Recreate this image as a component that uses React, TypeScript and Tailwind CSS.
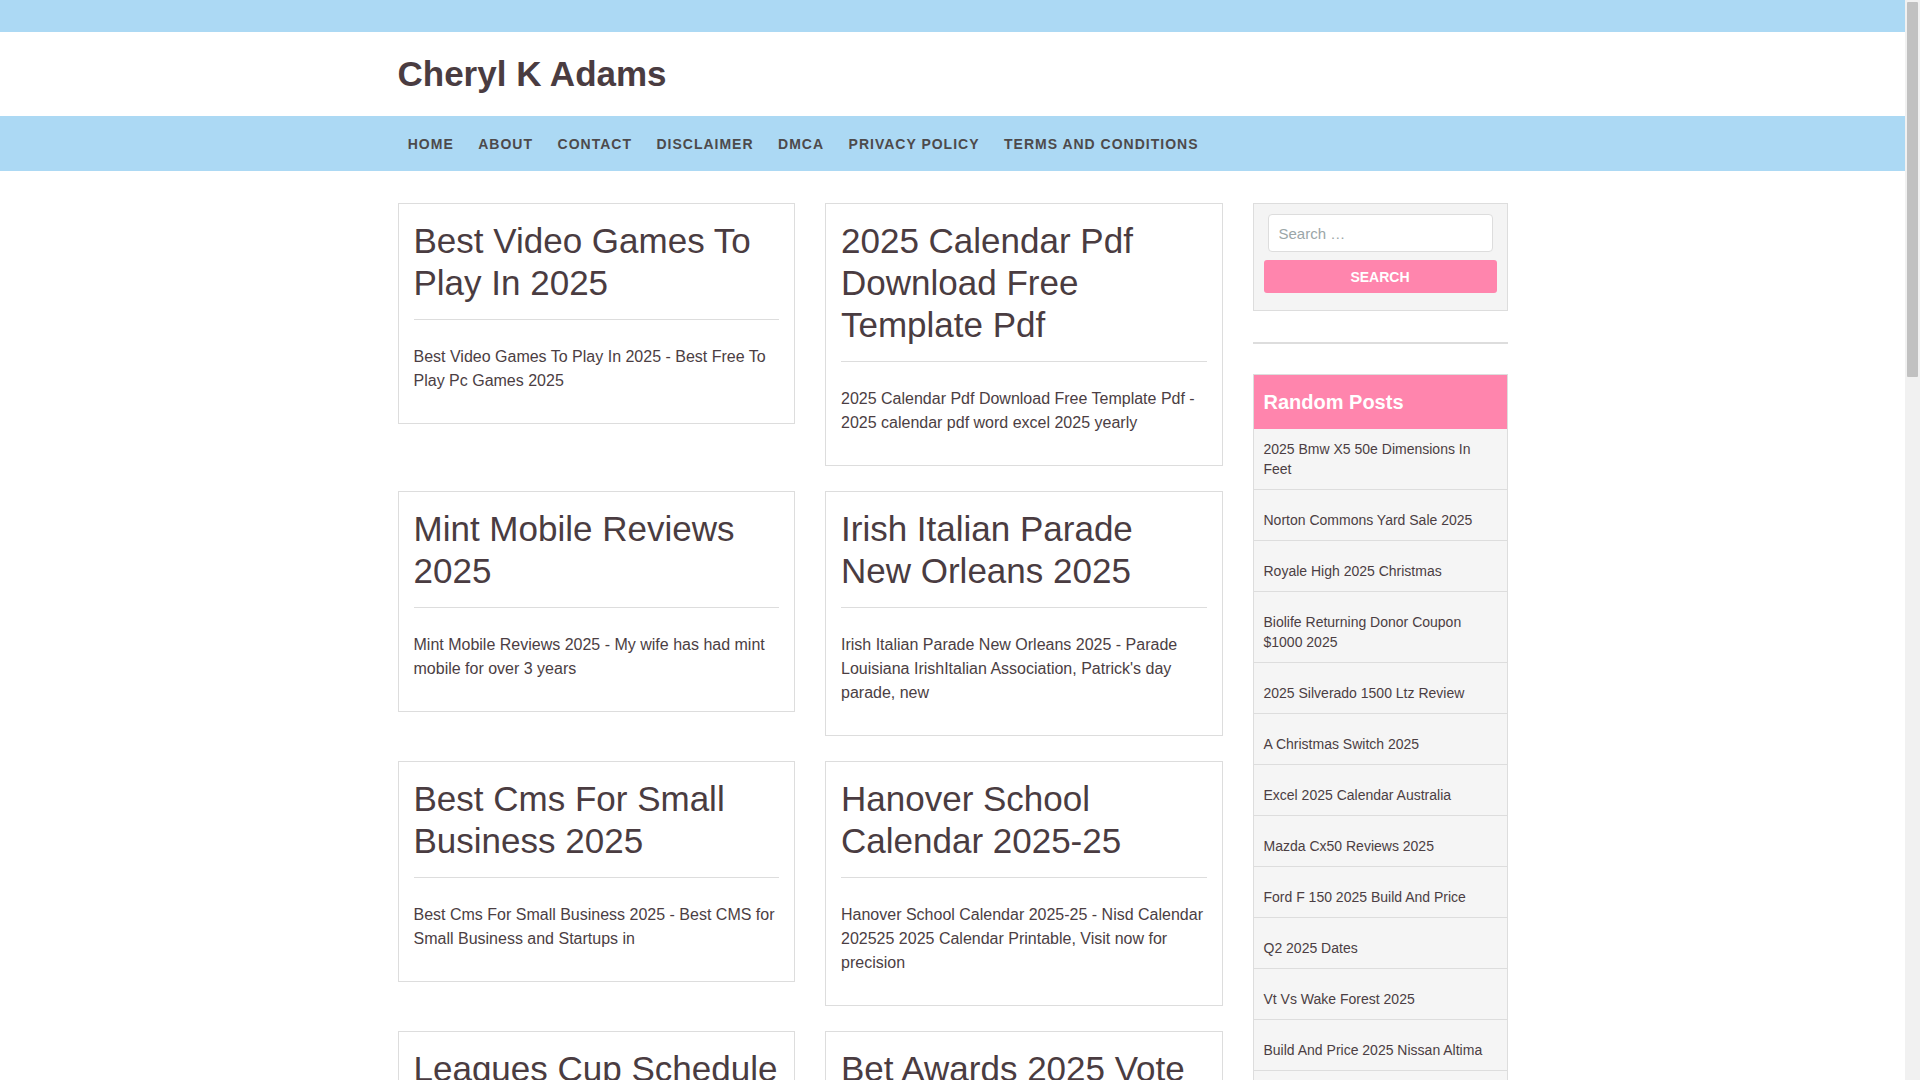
import React from "react";

type Post = { title: string; excerpt: string };

const posts: Post[] = [
  {
    title: "Best Video Games To Play In 2025",
    excerpt: "Best Video Games To Play In 2025 - Best Free To Play Pc Games 2025",
  },
  {
    title: "2025 Calendar Pdf Download Free Template Pdf",
    excerpt: "2025 Calendar Pdf Download Free Template Pdf - 2025 calendar pdf word excel 2025 yearly",
  },
  {
    title: "Mint Mobile Reviews 2025",
    excerpt: "Mint Mobile Reviews 2025 - My wife has had mint mobile for over 3 years",
  },
  {
    title: "Irish Italian Parade New Orleans 2025",
    excerpt:
      "Irish Italian Parade New Orleans 2025 - Parade Louisiana IrishItalian Association, Patrick's day parade, new",
  },
  {
    title: "Best Cms For Small Business 2025",
    excerpt: "Best Cms For Small Business 2025 - Best CMS for Small Business and Startups in",
  },
  {
    title: "Hanover School Calendar 2025-25",
    excerpt:
      "Hanover School Calendar 2025-25 - Nisd Calendar 202525 2025 Calendar Printable, Visit now for precision",
  },
  {
    title: "Leagues Cup Schedule 2025",
    excerpt: "Leagues Cup Schedule 2025 - Leagues Cup 2025 schedule, dates and match times",
  },
  {
    title: "Bet Awards 2025 Vote Online",
    excerpt: "Bet Awards 2025 Vote Online - How to vote for the BET Awards 2025 nominees",
  },
  {
    title: "Toyota Tacoma 2025 Colors",
    excerpt: "Toyota Tacoma 2025 Colors - See all the exterior paint options for the new truck",
  },
  {
    title: "Nfl Draft Order 2025 Round 1",
    excerpt: "Nfl Draft Order 2025 Round 1 - Full first round order after the regular season",
  },
  {
    title: "Easter Sunday 2025 Date",
    excerpt: "Easter Sunday 2025 Date - When is Easter in 2025 and how is it calculated",
  },
  {
    title: "Honda Pilot 2025 Trim Levels",
    excerpt: "Honda Pilot 2025 Trim Levels - Compare the Sport, EX-L, TrailSport and Elite",
  },
  {
    title: "March Madness 2025 Bracket",
    excerpt: "March Madness 2025 Bracket - Printable bracket for the NCAA tournament",
  },
  {
    title: "2025 Kia Telluride Review",
    excerpt: "2025 Kia Telluride Review - Pricing, specs and what is new this year",
  },
  {
    title: "Super Bowl 2025 Halftime Show",
    excerpt: "Super Bowl 2025 Halftime Show - Who is performing and when it starts",
  },
  {
    title: "Tax Brackets 2025 Married Filing Jointly",
    excerpt: "Tax Brackets 2025 Married Filing Jointly - Federal income tax rates and ranges",
  },
  {
    title: "Chinese New Year 2025 Animal",
    excerpt: "Chinese New Year 2025 Animal - The year of the wood snake begins",
  },
  {
    title: "Disney World Crowd Calendar 2025",
    excerpt: "Disney World Crowd Calendar 2025 - Best days to visit the parks this year",
  },
  {
    title: "Memorial Day 2025 Sales",
    excerpt: "Memorial Day 2025 Sales - The best deals on mattresses, appliances and more",
  },
  {
    title: "Ford Bronco 2025 Price",
    excerpt: "Ford Bronco 2025 Price - Starting MSRP for every trim and package",
  },
];

const randomPosts = [
  "2025 Bmw X5 50e Dimensions In Feet",
  "Norton Commons Yard Sale 2025",
  "Royale High 2025 Christmas",
  "Biolife Returning Donor Coupon $1000 2025",
  "2025 Silverado 1500 Ltz Review",
  "A Christmas Switch 2025",
  "Excel 2025 Calendar Australia",
  "Mazda Cx50 Reviews 2025",
  "Ford F 150 2025 Build And Price",
  "Q2 2025 Dates",
  "Vt Vs Wake Forest 2025",
  "Build And Price 2025 Nissan Altima",
  "Lexus Rx 350 2025 Redesign",
  "Spring Break 2025 Dates",
  "Jeep Wrangler 2025 Colors",
];

const navItems = ["Home", "About", "Contact", "Disclaimer", "DMCA", "Privacy Policy", "Terms and Conditions"];

function PostCard({ post }: { post: Post }) {
  return (
    <article className="border border-[#dddddd] bg-white px-[15px] pt-4 pb-4">
      <h2 className="text-[35px] font-normal leading-[42px] text-[#4a3c41]">
        <a href="#">{post.title}</a>
      </h2>
      <div className="mt-[15px] mb-[25px] h-px bg-[#dddddd]" />
      <p className="mb-[14px] text-base leading-6">{post.excerpt}</p>
    </article>
  );
}

function Sidebar() {
  return (
    <aside>
      <div className="border border-[#dddddd] bg-[#f4f4f4] px-[10px] pt-[10px] pb-[17px]">
        <input
          type="search"
          placeholder="Search …"
          className="mx-1 block h-[38px] w-[calc(100%-8px)] rounded border border-[#dddddd] bg-white px-[10px] text-[15px] outline-none placeholder:text-[#9ba6a8]"
        />
        <button className="mt-2 block h-[33px] w-full rounded-[3px] bg-[#ff85ad] text-sm font-bold text-white">
          SEARCH
        </button>
      </div>

      <div className="mt-[31px] h-[2px] bg-[#dddddd]" />

      <div className="mt-[30px] border border-[#dddddd] bg-[#f5f5f5]">
        <h3 className="flex h-[54px] items-center bg-[#ff85ad] px-[10px] text-[20px] font-bold text-white">
          Random Posts
        </h3>
        <ul>
          {randomPosts.map((t, i) => (
            <li
              key={t}
              className={
                i === 0
                  ? "border-b border-[#dddddd] px-[10px] pt-[10px] pb-[10px] text-sm leading-5"
                  : "border-b border-[#dddddd] px-[10px] pt-[20px] pb-[10px] text-sm leading-5"
              }
            >
              <a href="#">{t}</a>
            </li>
          ))}
        </ul>
      </div>
    </aside>
  );
}

// browser scrollbar as seen in the reference (page is ~3x viewport height)
function Scrollbar() {
  return (
    <div className="fixed top-0 right-0 z-10 h-screen w-[15px] bg-[#f1f1f1]">
      <div className="mx-[2px] mt-[2px] h-[375px] rounded-[1px] bg-[#c1c1c1]" />
    </div>
  );
}

export default function App() {
  return (
    <div className="min-h-screen bg-white font-['Liberation_Sans',Arial,sans-serif] text-[#4b3e43]">
      <div className="mr-[15px]">
        <div className="h-8 bg-[#acd9f4]" />

        <header className="h-[84px]">
          <div className="mx-auto flex h-full w-[1110px] items-center">
            <h1 className="text-[35px] font-bold leading-[42px] text-[#4a3c41]">
              <a href="#">Cheryl K Adams</a>
            </h1>
          </div>
        </header>

        <nav className="h-[55px] bg-[#acd9f4]">
          <div className="mx-auto flex h-full w-[1110px] items-center">
            <ul className="-ml-0.5 flex">
              {navItems.map((n) => (
                <li key={n}>
                  <a
                    href="#"
                    className="block px-[12.25px] text-sm font-bold uppercase tracking-[1px] text-[#4d4a4b]"
                  >
                    {n}
                  </a>
                </li>
              ))}
            </ul>
          </div>
        </nav>

        <main className="mx-auto mt-8 grid w-[1110px] grid-cols-[825px_255px] items-start gap-x-[30px]">
          <div className="grid grid-cols-2 items-start gap-x-[30px] gap-y-[25px]">
            {posts.map((p) => (
              <PostCard key={p.title} post={p} />
            ))}
          </div>
          <Sidebar />
        </main>

        <footer className="mt-10 bg-[#acd9f4] py-6">
          <div className="mx-auto w-[1110px] text-center text-sm text-[#4d4a4b]">
            Copyright © 2025 Cheryl K Adams
          </div>
        </footer>
      </div>
      <Scrollbar />
    </div>
  );
}
